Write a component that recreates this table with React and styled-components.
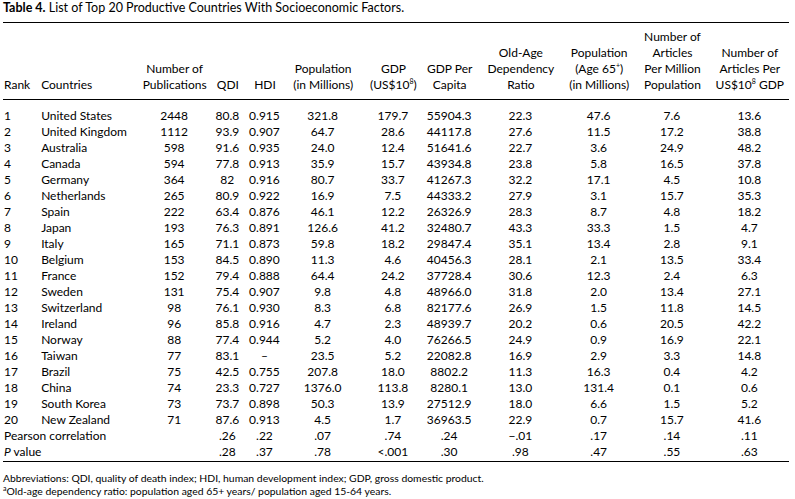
import React from "react";
import styled, { createGlobalStyle } from "styled-components";

const GlobalStyle = createGlobalStyle`
  body {
    margin: 0;
    background: #ffffff;
    color: #000000;
    font-family: Lato, "Open Sans", sans-serif;
  }
`;

const Page = styled.div`
  width: 786px;
  padding: 0 3px;
  font-size: 12px;
  line-height: 16px;
`;

const Title = styled.div`
  font-size: 12.5px;
  line-height: 16px;
  padding-bottom: 6px;

  b {
    font-weight: 700;
  }
`;

const Table = styled.table`
  width: 786px;
  table-layout: fixed;
  border-collapse: collapse;
  border-top: 1.5px solid #000;
  border-bottom: 1.5px solid #000;

  thead tr {
    border-bottom: 1px solid #000;
  }
`;

const HeadCell = styled.th`
  font-weight: 400;
  text-align: ${(p) => p.$align || "center"};
  padding: 6px 0 6px ${(p) => p.$pad || 0}px;
  vertical-align: bottom;
  white-space: nowrap;
  line-height: 16px;
`;

const BodyRow = styled.tr`
  td {
    padding-top: ${(p) => (p.$first ? 8 : 0)}px;
    padding-bottom: ${(p) => (p.$last ? 1 : 0)}px;
  }
`;

const Cell = styled.td`
  text-align: ${(p) => p.$align || "center"};
  padding-left: ${(p) => p.$pad || 0}px;
  white-space: nowrap;
  line-height: 16px;
  height: 16px;
`;

const Sup = styled.sup`
  font-size: 7px;
  line-height: 0;
  vertical-align: 5px;
`;

const Notes = styled.div`
  padding-top: 10px;
  font-size: 10.4px;
  line-height: 13px;
`;

const NoteSup = styled.sup`
  font-size: 7px;
  line-height: 0;
  vertical-align: 4px;
`;

const columns = [
  { width: 35, align: "left", pad: 1 },
  { width: 104, align: "left", pad: 3 },
  { width: 64 },
  { width: 42 },
  { width: 32 },
  { width: 84 },
  { width: 56 },
  { width: 56 },
  { width: 86 },
  { width: 70 },
  { width: 76 },
  { width: 78 },
];

const headers = [
  ["Rank"],
  ["Countries"],
  ["Number of", "Publications"],
  ["QDI"],
  ["HDI"],
  ["Population", "(in Millions)"],
  ["GDP", <>(US$10<Sup>8</Sup>)</>],
  ["GDP Per", "Capita"],
  ["Old-Age", "Dependency", "Ratio"],
  ["Population", <>(Age 65<Sup>+</Sup>)</>, "(in Millions)"],
  ["Number of", "Articles", "Per Million", "Population"],
  ["Number of", "Articles Per", <>US$10<Sup>8</Sup> GDP</>],
];

const rows = [
  ["1", "United States", "2448", "80.8", "0.915", "321.8", "179.7", "55904.3", "22.3", "47.6", "7.6", "13.6"],
  ["2", "United Kingdom", "1112", "93.9", "0.907", "64.7", "28.6", "44117.8", "27.6", "11.5", "17.2", "38.8"],
  ["3", "Australia", "598", "91.6", "0.935", "24.0", "12.4", "51641.6", "22.7", "3.6", "24.9", "48.2"],
  ["4", "Canada", "594", "77.8", "0.913", "35.9", "15.7", "43934.8", "23.8", "5.8", "16.5", "37.8"],
  ["5", "Germany", "364", "82", "0.916", "80.7", "33.7", "41267.3", "32.2", "17.1", "4.5", "10.8"],
  ["6", "Netherlands", "265", "80.9", "0.922", "16.9", "7.5", "44333.2", "27.9", "3.1", "15.7", "35.3"],
  ["7", "Spain", "222", "63.4", "0.876", "46.1", "12.2", "26326.9", "28.3", "8.7", "4.8", "18.2"],
  ["8", "Japan", "193", "76.3", "0.891", "126.6", "41.2", "32480.7", "43.3", "33.3", "1.5", "4.7"],
  ["9", "Italy", "165", "71.1", "0.873", "59.8", "18.2", "29847.4", "35.1", "13.4", "2.8", "9.1"],
  ["10", "Belgium", "153", "84.5", "0.890", "11.3", "4.6", "40456.3", "28.1", "2.1", "13.5", "33.4"],
  ["11", "France", "152", "79.4", "0.888", "64.4", "24.2", "37728.4", "30.6", "12.3", "2.4", "6.3"],
  ["12", "Sweden", "131", "75.4", "0.907", "9.8", "4.8", "48966.0", "31.8", "2.0", "13.4", "27.1"],
  ["13", "Switzerland", "98", "76.1", "0.930", "8.3", "6.8", "82177.6", "26.9", "1.5", "11.8", "14.5"],
  ["14", "Ireland", "96", "85.8", "0.916", "4.7", "2.3", "48939.7", "20.2", "0.6", "20.5", "42.2"],
  ["15", "Norway", "88", "77.4", "0.944", "5.2", "4.0", "76266.5", "24.9", "0.9", "16.9", "22.1"],
  ["16", "Taiwan", "77", "83.1", "\u2013", "23.5", "5.2", "22082.8", "16.9", "2.9", "3.3", "14.8"],
  ["17", "Brazil", "75", "42.5", "0.755", "207.8", "18.0", "8802.2", "11.3", "16.3", "0.4", "4.2"],
  ["18", "China", "74", "23.3", "0.727", "1376.0", "113.8", "8280.1", "13.0", "131.4", "0.1", "0.6"],
  ["19", "South Korea", "73", "73.7", "0.898", "50.3", "13.9", "27512.9", "18.0", "6.6", "1.5", "5.2"],
  ["20", "New Zealand", "71", "87.6", "0.913", "4.5", "1.7", "36963.5", "22.9", "0.7", "15.7", "41.6"],
];

const stats = [
  { label: "Pearson correlation", values: ["", ".26", ".22", ".07", ".74", ".24", "\u2212.01", ".17", ".14", ".11"] },
  { label: <><i>P</i> value</>, values: ["", ".28", ".37", ".78", "<.001", ".30", ".98", ".47", ".55", ".63"] },
];

const App = () => {
  return (
    <Page>
      <GlobalStyle />
      <Title>
        <b>Table 4.</b> List of Top 20 Productive Countries With Socioeconomic Factors.
      </Title>
      <Table>
        <colgroup>
          {columns.map((c, i) => (
            <col key={i} style={{ width: c.width }} />
          ))}
        </colgroup>
        <thead>
          <tr>
            {headers.map((lines, i) => (
              <HeadCell key={i} $align={columns[i].align} $pad={columns[i].pad}>
                {lines.map((l, j) => (
                  <div key={j}>{l}</div>
                ))}
              </HeadCell>
            ))}
          </tr>
        </thead>
        <tbody>
          {rows.map((r, i) => (
            <BodyRow key={i} $first={i === 0}>
              {r.map((v, j) => (
                <Cell key={j} $align={columns[j].align} $pad={columns[j].pad}>
                  {v}
                </Cell>
              ))}
            </BodyRow>
          ))}
          {stats.map((s, i) => (
            <BodyRow key={"s" + i} $last={i === stats.length - 1}>
              <Cell colSpan={2} $align="left" $pad={1}>
                {s.label}
              </Cell>
              {s.values.map((v, j) => (
                <Cell key={j}>{v}</Cell>
              ))}
            </BodyRow>
          ))}
        </tbody>
      </Table>
      <Notes>
        <div>
          Abbreviations: QDI, quality of death index; HDI, human development index; GDP, gross domestic product.
        </div>
        <div>
          <NoteSup>a</NoteSup>Old-age dependency ratio: population aged 65+ years/ population aged 15-64 years.
        </div>
      </Notes>
    </Page>
  );
};

export default App;
